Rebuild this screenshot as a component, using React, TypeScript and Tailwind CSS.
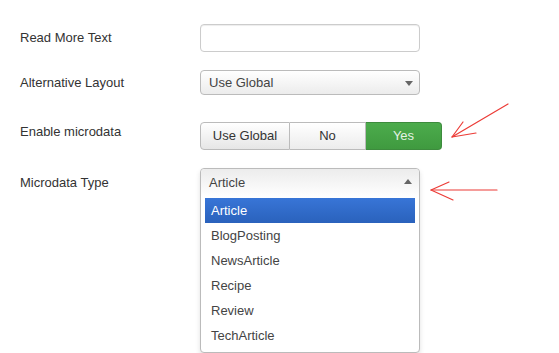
import React from "react";

export default function App() {
  const items = ["Article", "BlogPosting", "NewsArticle", "Recipe", "Review", "TechArticle"];
  return (
    <div className="relative w-[559px] h-[353px] overflow-hidden bg-white font-['Liberation_Sans',Arial,sans-serif] text-[13px] leading-[18px] text-[#333]">
      <div className="flex flex-col pl-[20px] pt-[24px]">
        {/* Row 1 */}
        <div className="flex items-start">
          <div className="w-[180px] pt-[5px]">Read More Text</div>
          <div className="w-[220px] h-[28px] rounded-[4px] border border-[#cccccc] bg-white shadow-[inset_0_1px_1px_rgba(0,0,0,0.075)]" />
        </div>
        {/* Row 2 */}
        <div className="flex items-start mt-[18px]">
          <div className="w-[180px] pt-[4px]">Alternative Layout</div>
          <div className="relative w-[220px] h-[25px] rounded-[4px] border border-[#bbbbbb] bg-gradient-to-b from-white to-[#ececec] flex items-center pl-[8px] text-[#444]">
            Use Global
            <span className="absolute right-[6px] top-[10px] w-0 h-0 border-l-[4px] border-r-[4px] border-t-[5px] border-l-transparent border-r-transparent border-t-[#666]" />
          </div>
        </div>
        {/* Row 3 */}
        <div className="flex items-start mt-[27px]">
          <div className="w-[180px] pt-[1px]">Enable microdata</div>
          <div className="flex h-[28px]">
            <div className="w-[90px] h-full flex items-center justify-center rounded-l-[4px] border border-[#bbbbbb] bg-gradient-to-b from-white to-[#e6e6e6] text-[#333]">
              Use Global
            </div>
            <div className="w-[76px] h-full flex items-center justify-center border-y border-r border-[#bbbbbb] bg-gradient-to-b from-white to-[#ececec] text-[#333]">
              No
            </div>
            <div className="w-[76px] h-full flex items-center justify-center rounded-r-[4px] border border-l-0 border-[#3d8b3d] bg-gradient-to-b from-[#4cac4c] to-[#3f9a3f] text-[#e4f2e4]">
              Yes
            </div>
          </div>
        </div>
        {/* Row 4 */}
        <div className="flex items-start mt-[18px]">
          <div className="w-[180px] pt-[6px]">Microdata Type</div>
          <div className="w-[220px] h-[185px] rounded-[4px] border border-[#bbbbbb] bg-white shadow-[0_3px_5px_rgba(0,0,0,0.12)] flex flex-col">
            <div className="relative h-[28px] rounded-t-[4px] bg-gradient-to-b from-[#ececec] to-white flex items-center pl-[8px] text-[#444]">
              Article
              <span className="absolute right-[7px] top-[10px] w-0 h-0 border-l-[4px] border-r-[4px] border-b-[5px] border-l-transparent border-r-transparent border-b-[#666]" />
            </div>
            <div className="flex flex-col px-[4px] pt-[1px]">
              {items.map((it, i) => (
                <div
                  key={it}
                  className={
                    i === 0
                      ? "h-[25px] flex items-center pl-[6px] text-white bg-gradient-to-b from-[#3875d7] to-[#2a62bc]"
                      : "h-[25px] flex items-center pl-[6px] text-[#444]"
                  }
                >
                  {it}
                </div>
              ))}
            </div>
          </div>
        </div>
      </div>
      {/* Annotation arrows */}
      <svg className="absolute left-0 top-0 pointer-events-none" width="559" height="353">
        <g stroke="#ec3b36" strokeWidth="1.2" fill="none" strokeLinecap="round" strokeLinejoin="round">
          <path d="M508 104 L452 137" />
          <path d="M463 122 L452 137 L476 133" />
          <path d="M497 190 L431 190" />
          <path d="M449 182 L431 190 L453 200" />
        </g>
      </svg>
    </div>
  );
}
